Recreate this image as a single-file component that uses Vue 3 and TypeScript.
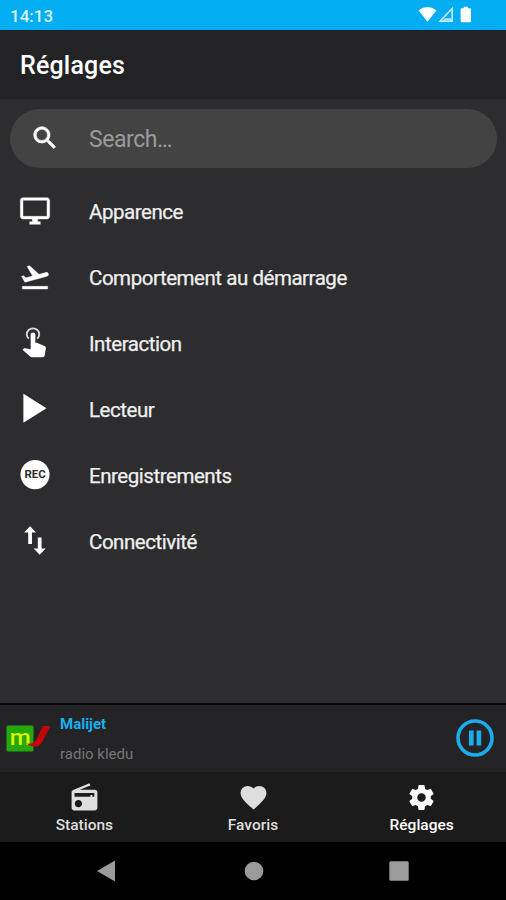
<script setup lang="ts">
interface SettingItem {
  id: string
  label: string
}

interface Tab {
  id: string
  label: string
  path: string
  active: boolean
}

const settings: SettingItem[] = [
  { id: 'appearance', label: 'Apparence' },
  { id: 'startup', label: 'Comportement au démarrage' },
  { id: 'interaction', label: 'Interaction' },
  { id: 'player', label: 'Lecteur' },
  { id: 'recordings', label: 'Enregistrements' },
  { id: 'connectivity', label: 'Connectivité' },
]

const tabs: Tab[] = [
  {
    id: 'stations',
    label: 'Stations',
    active: false,
    path: 'M3.24 6.15C2.51 6.43 2 7.17 2 8v12c0 1.1.89 2 2 2h16c1.11 0 2-.9 2-2V8c0-1.11-.89-2-2-2H8.3l8.26-3.34L15.88 1 3.24 6.15zM7.300 19.600c-1.55 0-2.800-1.250-2.800-2.800s1.250-2.800 2.800-2.800 2.800 1.250 2.800 2.800-1.250 2.800-2.800 2.800zm12.300-8.200h-1.500v-1.300h-1.500v1.300H4.300V8.500h15.300v2.900z',
  },
  {
    id: 'favorites',
    label: 'Favoris',
    active: false,
    path: 'M12 21.35l-1.45-1.32C5.4 15.36 2 12.28 2 8.5 2 5.42 4.42 3 7.5 3c1.74 0 3.41.81 4.5 2.09C13.09 3.81 14.76 3 16.5 3 19.58 3 22 5.42 22 8.5c0 3.78-3.4 6.86-8.55 11.54L12 21.35z',
  },
  {
    id: 'settings',
    label: 'Réglages',
    active: true,
    path: 'M19.14 12.94c.04-.3.06-.61.06-.94 0-.32-.02-.64-.07-.94l2.03-1.58c.18-.14.23-.41.12-.61l-1.92-3.32c-.12-.22-.37-.29-.59-.22l-2.39.96c-.5-.38-1.03-.7-1.62-.94l-.36-2.54c-.04-.24-.24-.41-.48-.41h-3.84c-.24 0-.43.17-.47.41l-.36 2.54c-.59.24-1.13.57-1.62.94l-2.39-.96c-.22-.08-.47 0-.59.22L2.74 8.87c-.12.21-.08.47.12.61l2.03 1.58c-.05.3-.09.63-.09.94s.02.64.07.94l-2.03 1.58c-.18.14-.23.41-.12.61l1.92 3.32c.12.22.37.29.59.22l2.39-.96c.5.38 1.03.7 1.62.94l.36 2.54c.05.24.24.41.48.41h3.84c.24 0 .44-.17.47-.41l.36-2.54c.59-.24 1.13-.56 1.62-.94l2.39.96c.22.08.47 0 .59-.22l1.92-3.32c.12-.22.07-.47-.12-.61l-2.01-1.58zM12 15.3c-1.82 0-3.3-1.48-3.3-3.3s1.48-3.3 3.3-3.3 3.3 1.48 3.3 3.3-1.48 3.3-3.3 3.3z',
  },
]
</script>

<template>
  <div class="screen">
    <div class="status">
      <span class="clock">14:13</span>
      <svg class="status-icons" width="56" height="18" viewBox="0 0 56 18">
        <path d="M.5 4.2Q9.500-2.400 18.500 4.200L9.500 15.800z" fill="#fff" />
        <path d="M34.200 2.600V15.300H22z" fill="none" stroke="#d3f1ff" stroke-width="1.500" />
        <path d="M24 15.300L27 12.300H34.200V15.300z" fill="#a8e2fc" />
        <path d="M45.800 0.700h4v1.600h2q1.200 0 1.200 1.200V15q0 1.200-1.200 1.200h-8q-1.200 0-1.200-1.200V3.500q0-1.200 1.200-1.200h2z" fill="#fff" />
      </svg>
    </div>

    <header class="header"><h1>Réglages</h1></header>

    <main class="content">
      <div class="search">
        <svg class="search-icon" width="30" height="30" viewBox="0 0 24 24">
          <path d="M15.500 14h-.79l-.28-.27C15.410 12.590 16 11.110 16 9.500 16 5.910 13.090 3 9.500 3S3 5.910 3 9.500 5.910 16 9.500 16c1.610 0 3.090-.59 4.230-1.570l.27.28v.79l5 4.990L20.490 19l-4.990-5zm-6 0C7.010 14 5 11.990 5 9.500S7.010 5 9.500 5 14 7.010 14 9.500 11.990 14 9.500 14z" />
        </svg>
        <span>Search…</span>
      </div>

      <ul class="settings">
        <li v-for="item in settings" :key="item.id" :class="item.id">
          <svg class="row-icon" width="32" height="32" viewBox="0 0 24 24">
            <path v-if="item.id === 'appearance'" d="M21 2H3c-1.100 0-2 .9-2 2v12c0 1.100.9 2 2 2h7v2H8v2h8v-2h-2v-2h7c1.100 0 2-.9 2-2V4c0-1.100-.9-2-2-2zm0 14H3V4h18v12z" />
            <path v-else-if="item.id === 'startup'" d="M2.500 19h19v2h-19zM22.070 9.640c-.21-.8-1.040-1.280-1.840-1.060L14.920 10l-6.900-6.430-1.930.51 4.140 7.170-4.970 1.330-1.970-1.540-1.450.39 1.820 3.160.77 1.330 1.600-.43 5.310-1.420 4.350-1.160L21 11.490c.81-.23 1.280-1.050 1.070-1.850z" />
            <g v-else-if="item.id === 'interaction'" transform="translate(-2.950 -2.100) scale(1.170 1.030)">
              <path class="ring" d="M8.800 10.500A4 4.300 0 1 1 14.200 10.500" />
              <path d="M18.840 15.870l-4.540-2.260c-.17-.07-.35-.11-.54-.11H13v-6c0-.83-.67-1.500-1.500-1.500S10 6.670 10 7.500v10.740l-3.430-.72c-.08-.01-.15-.03-.24-.03-.31 0-.59.13-.79.33l-.79.8 4.940 4.940c.27.27.65.44 1.060.44h6.790c.75 0 1.330-.55 1.440-1.280l.75-5.270c.01-.07.02-.14.02-.2 0-.62-.38-1.160-.91-1.380z" />
            </g>
            <path v-else-if="item.id === 'player'" d="M3.300 .6L20.600 11.500L3.300 22.400z" />
            <template v-else-if="item.id === 'recordings'">
              <circle cx="12" cy="11.700" r="10.900" />
              <text class="rec" x="12.100" y="14.600" text-anchor="middle" textLength="16" lengthAdjust="spacingAndGlyphs">REC</text>
            </template>
            <path v-else d="M8.300 1L3.800 5.700h3.100v8.500h2.800V5.700h3.100zM15.500 22.400l4.500-4.700h-3.100V9.300h-2.800v8.400H11z" />
          </svg>
          <span>{{ item.label }}</span>
        </li>
      </ul>
    </main>

    <section class="player-bar">
      <svg class="cover" width="46" height="30" viewBox="0 0 46 30">
        <rect x=".5" y="1.500" width="27" height="26" rx="1.500" fill="#24a80c" />
        <text class="logo-letter" x="14.200" y="20.500" text-anchor="middle" textLength="21" lengthAdjust="spacingAndGlyphs">m</text>
        <path d="M37 2h7.500L36 18.500Q33.500 22.500 28.500 22.500Q23.500 22.500 20.500 19.500Q27.500 20.500 30 16z" fill="#c60508" />
      </svg>
      <div class="track">
        <strong>Malijet</strong>
        <span>radio kledu</span>
      </div>
      <svg class="pause" width="38" height="38" viewBox="0 0 38 38">
        <circle cx="19" cy="19" r="17" fill="none" stroke="#19aeef" stroke-width="3.600" />
        <path d="M13 11.500h4.600v15H13zM20.600 11.500h4.600v15h-4.600z" fill="#19aeef" />
      </svg>
    </section>

    <nav class="tabs">
      <div v-for="tab in tabs" :key="tab.id" class="tab" :class="[tab.id, { active: tab.active }]">
        <svg width="31" height="31" viewBox="0 0 24 24"><path :d="tab.path" /></svg>
        <span>{{ tab.label }}</span>
      </div>
    </nav>

    <div class="system">
      <svg width="18" height="22" viewBox="0 0 18 22"><path d="M18 .5v21L0 11z" /></svg>
      <svg class="home" width="20" height="20" viewBox="0 0 20 20"><circle cx="10" cy="10" r="9.300" /></svg>
      <svg width="20" height="20" viewBox="0 0 20 20"><rect x=".3" y=".3" width="19.400" height="19.400" rx="1.500" /></svg>
    </div>
  </div>
</template>

<style>
body {
  margin: 0;
  background: #000;
}
</style>

<style scoped>
.screen {
  display: flex;
  flex-direction: column;
  width: 506px;
  height: 900px;
  overflow: hidden;
  background: #2d2d2f;
  color: #f0f0f0;
  font-family: Roboto, sans-serif;
}
svg {
  display: block;
  flex: none;
  overflow: visible;
}
.status {
  display: flex;
  justify-content: space-between;
  box-sizing: border-box;
  height: 31px;
  padding: 6px 32px 0 10px;
  background: #02adf1;
  border-bottom: 1px solid #0a222d;
}
.clock {
  font-size: 17px;
  line-height: 20px;
  font-weight: 500;
  color: #d9f4ff;
}
.header {
  display: flex;
  align-items: center;
  box-sizing: border-box;
  height: 68px;
  padding: 2px 0 0 20px;
  background: #232325;
}
h1 {
  margin: 0;
  font-size: 25px;
  line-height: 30px;
  font-weight: 500;
  letter-spacing: 0.18px;
  color: #fff;
}
.content {
  flex: 1;
  padding-top: 10px;
}
.search {
  display: flex;
  align-items: center;
  height: 59px;
  margin: 0 9px 10px 10px;
  border-radius: 30px;
  background: #434343;
  color: #9b9b9b;
  font-size: 23px;
  letter-spacing: -0.45px;
}
.search span {
  padding-top: 2px;
}
.search-icon {
  margin: 0 29px 2px 20px;
  fill: #fff;
  stroke: #fff;
  stroke-width: 0.5px;
}
.settings {
  margin: 0;
  padding: 0;
  list-style: none;
}
.settings li {
  display: flex;
  align-items: center;
  gap: 38px;
  height: 66px;
  padding-left: 19px;
  font-size: 20.500px;
  letter-spacing: -0.46px;
  -webkit-text-stroke: 0.25px #f0f0f0;
}
.settings li span {
  padding-top: 1px;
}
.row-icon {
  fill: #fff;
}
.appearance path,
.startup path {
  stroke: #fff;
  stroke-width: 0.3px;
}
.ring {
  fill: none;
  stroke: #d8d8d8;
  stroke-width: 1.2px;
}
.rec {
  font: 700 8px Roboto, sans-serif;
  letter-spacing: 0;
  fill: #2d2d2f;
  -webkit-text-stroke: 0;
}
.player-bar {
  display: flex;
  align-items: center;
  box-sizing: border-box;
  height: 69px;
  padding: 0 12px 0 6px;
  border-top: 2px solid #08080a;
  background: #242426;
}
.pause {
  margin-bottom: 2px;
}
.logo-letter {
  font: 500 22px Roboto, sans-serif;
  fill: #d9f500;
}
.track {
  display: flex;
  flex: 1;
  flex-direction: column;
  gap: 10px;
  margin-left: 8px;
  font-size: 15px;
  line-height: 20px;
}
.track strong {
  color: #19aeef;
  font-weight: 700;
}
.track span {
  color: #777;
}
.tabs {
  display: flex;
  height: 70px;
  background: #1b1b1b;
}
.tab {
  display: flex;
  flex: 1;
  flex-direction: column;
  align-items: center;
  padding-top: 10px;
  color: #dedede;
  fill: #dedede;
  font-size: 15.500px;
  line-height: 22px;
  font-weight: 500;
}
.tab span {
  padding-top: 1px;
}
.tab.active {
  color: #fff;
  fill: #fff;
}
.system {
  display: flex;
  align-items: center;
  justify-content: space-between;
  box-sizing: border-box;
  height: 58px;
  padding: 0 97px;
  background: #000;
  fill: #9b9b9b;
}
.home {
  margin-left: 3px;
}
</style>
